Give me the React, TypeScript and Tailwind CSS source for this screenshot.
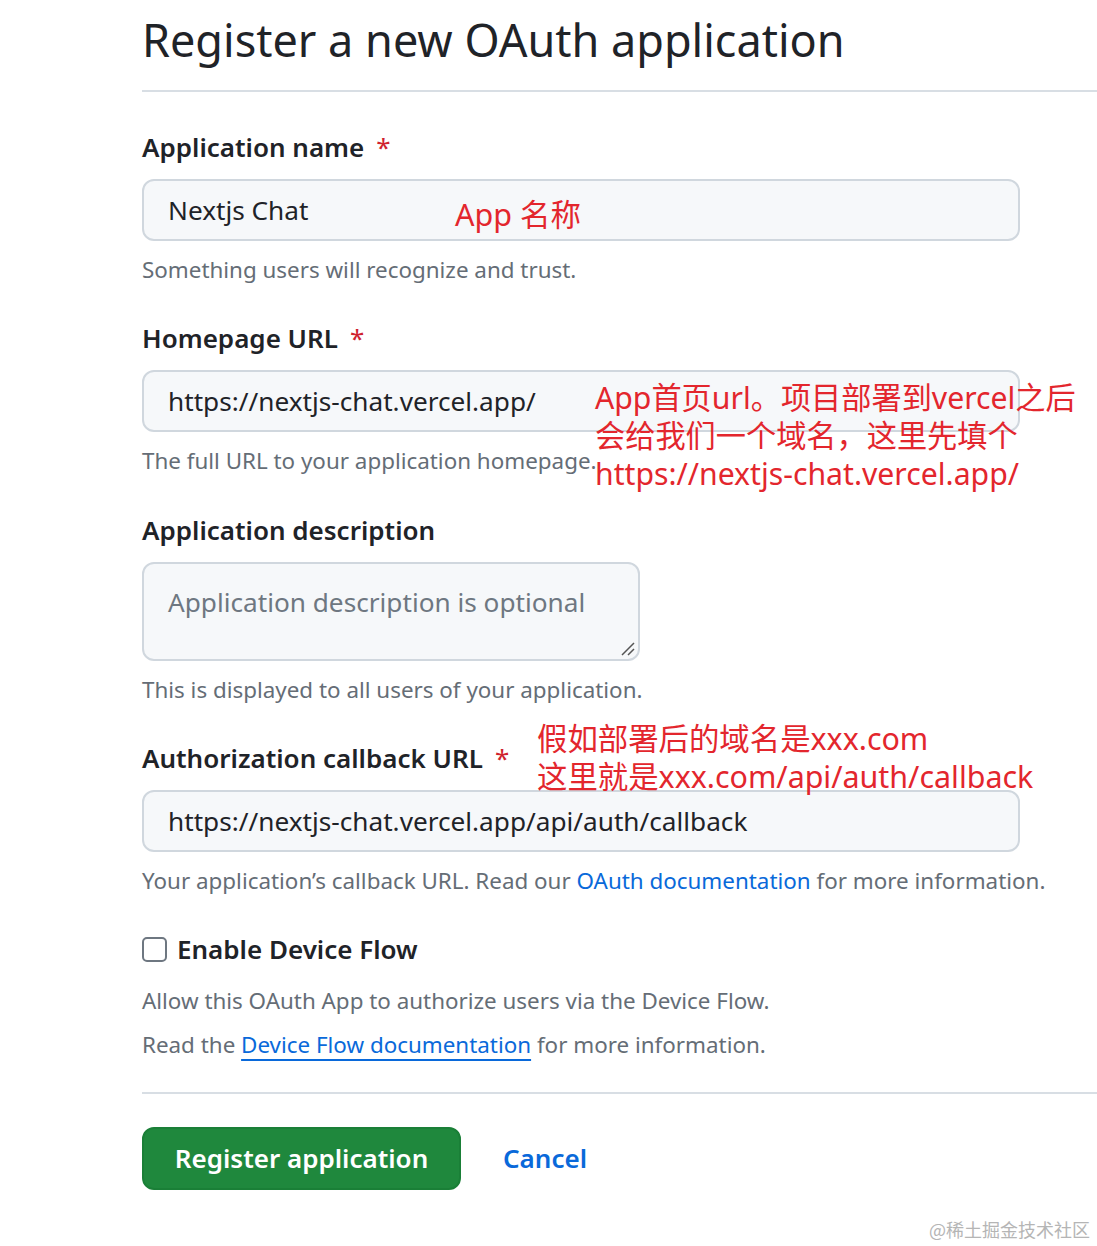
import React from 'react';

const font = { fontFamily: '"Noto Sans", "Noto Sans CJK SC", sans-serif' };

const Label: React.FC<{ text: string; required?: boolean }> = ({ text, required }) => (
  <div className="h-10 leading-10 text-[26px] font-semibold text-[#1f2328]">
    {text}
    {required && <span className="ml-3 font-normal text-[#cf222e]">*</span>}
  </div>
);

const Hint: React.FC<{ children: React.ReactNode }> = ({ children }) => (
  <div className="mt-[11px] h-9 leading-9 text-[22.4px] text-[#656d76]">{children}</div>
);

const TextInput: React.FC<{ value: string }> = ({ value }) => (
  <div className="mt-3 h-[62px] w-[878px] rounded-xl border-2 border-[#d0d7de] bg-[#f6f8fa] px-6 pt-[2px] flex items-center text-[26.2px] text-[#1f2328]">
    {value}
  </div>
);

const App: React.FC = () => {
  return (
    <div className="relative min-h-[1246px] w-[1097px] bg-white overflow-hidden" style={font}>
      <div className="pl-[142px]">
        {/* Title */}
        <div className="h-[92px] border-b-2 border-[#d8dee4]">
          <h1 className="pt-[10px] leading-[60px] text-[45px] text-[#1f2328]">Register a new OAuth application</h1>
        </div>

        <div className="mt-[35px]">
          <Label text="Application name" required />
          <TextInput value="Nextjs Chat" />
          <Hint>Something users will recognize and trust.</Hint>
        </div>

        <div className="mt-[30px]">
          <Label text="Homepage URL" required />
          <TextInput value="https://nextjs-chat.vercel.app/" />
          <Hint>The full URL to your application homepage.</Hint>
        </div>

        <div className="mt-[31px]">
          <Label text="Application description" />
          <div className="relative mt-3 h-[99px] w-[498px] rounded-xl border-2 border-[#d0d7de] bg-[#f6f8fa] px-6 pt-[20px] text-[26.2px] leading-9 text-[#6e7781]">
            Application description is optional
            <svg className="absolute bottom-[3px] right-[3px]" width="16" height="16" viewBox="0 0 16 16">
              <path d="M15 3 L3 15 M15 9 L9 15" stroke="#555" strokeWidth="1.5" />
            </svg>
          </div>
          <Hint>This is displayed to all users of your application.</Hint>
        </div>

        <div className="mt-[30px]">
          <Label text="Authorization callback URL" required />
          <TextInput value="https://nextjs-chat.vercel.app/api/auth/callback" />
          <Hint>
            Your application’s callback URL. Read our{' '}
            <span className="text-[#0969da]">OAuth documentation</span> for more information.
          </Hint>
        </div>

        <div className="mt-[30px] flex h-10 items-center gap-[10px]">
          <div className="h-[25px] w-[25px] rounded-[5px] border-2 border-[#6e7781] bg-white" />
          <div className="text-[26px] font-semibold text-[#1f2328]">Enable Device Flow</div>
        </div>
        <div className="mt-[14px] h-9 leading-9 text-[22.4px] text-[#656d76]">
          Allow this OAuth App to authorize users via the Device Flow.
        </div>
        <div className="mt-2 h-9 leading-9 text-[22.4px] text-[#656d76]">
          Read the{' '}
          <span className="text-[#0969da] underline decoration-2 underline-offset-[6px]">Device Flow documentation</span>{' '}
          for more information.
        </div>

        <div className="mt-[29px] border-t-2 border-[#d8dee4]" />

        <div className="mt-[33px] flex items-center gap-[42px]">
          <div className="flex h-[63px] w-[319px] items-center justify-center rounded-xl border-2 border-[#1a7f37] bg-[#1f883d] text-[26px] font-semibold text-white">
            Register application
          </div>
          <div className="text-[26px] font-semibold text-[#0969da]">Cancel</div>
        </div>
      </div>

      {/* Annotations */}
      <div className="absolute left-[455px] top-[194px] text-[30.5px] leading-[40px] text-[#e3262d]">App 名称</div>
      <div className="absolute left-[595px] top-[379px] text-[30.2px] leading-[38px] text-[#e3262d]">
        <div>App首页url。项目部署到vercel之后</div>
        <div>会给我们一个域名，这里先填个</div>
        <div>https://nextjs-chat.vercel.app/</div>
      </div>
      <div className="absolute left-[537px] top-[720px] text-[30.4px] leading-[38px] text-[#e3262d]">
        <div>假如部署后的域名是xxx.com</div>
        <div>这里就是xxx.com/api/auth/callback</div>
      </div>

      <div className="absolute right-[7px] top-[1216px] text-[18px] text-[#b5b5b5]" style={{ fontFamily: '"Noto Sans CJK SC", serif' }}>
        @稀土掘金技术社区
      </div>
    </div>
  );
};

export default App;
